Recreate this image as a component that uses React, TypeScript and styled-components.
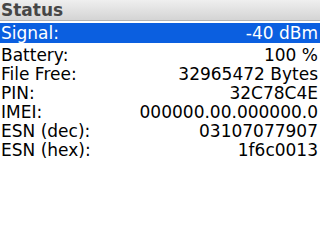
import React from "react";
import styled, { createGlobalStyle } from "styled-components";

const Global = createGlobalStyle`
  html, body { margin: 0; padding: 0; background: #ffffff; }
  body { width: 320px; height: 240px; overflow: hidden; font-family: "DejaVu Sans", sans-serif; }
`;

const Screen = styled.div`
  width: 320px;
  height: 240px;
  display: flex;
  flex-direction: column;
  background: #ffffff;
`;

const Header = styled.div`
  height: 20px;
  display: flex;
  align-items: center;
  padding-left: 1px;
  background: linear-gradient(#efefef, #d4d4d4);
  border-bottom: 1px solid #b4b4b4;
  color: #464646;
  font-weight: bold;
  font-size: 17px;
`;

const List = styled.div`
  margin-top: 2px;
  display: flex;
  flex-direction: column;
`;

const Row = styled.div<{ $selected?: boolean }>`
  box-sizing: border-box;
  height: ${(p) => (p.$selected ? "20px" : "19px")};
  line-height: ${(p) => (p.$selected ? "20px" : "19px")};
  padding: ${(p) => (p.$selected ? "0 2px 0 1px" : "3px 2px 0 1px")};
  display: flex;
  justify-content: space-between;
  font-size: 17px;
  white-space: nowrap;
  background: ${(p) => (p.$selected ? "#0b5fe0" : "transparent")};
  color: ${(p) => (p.$selected ? "#ffffff" : "#000000")};
`;

const Label = styled.span``;
const Value = styled.span``;

const rows: [string, string][] = [
  ["Signal:", "-40 dBm"],
  ["Battery:", "100 %"],
  ["File Free:", "32965472 Bytes"],
  ["PIN:", "32C78C4E"],
  ["IMEI:", "000000.00.000000.0"],
  ["ESN (dec):", "03107077907"],
  ["ESN (hex):", "1f6c0013"],
];

export default function App() {
  return (
    <Screen>
      <Global />
      <Header>Status</Header>
      <List>
        {rows.map(([l, v], i) => (
          <Row key={l} $selected={i === 0}>
            <Label>{l}</Label>
            <Value>{v}</Value>
          </Row>
        ))}
      </List>
    </Screen>
  );
}
